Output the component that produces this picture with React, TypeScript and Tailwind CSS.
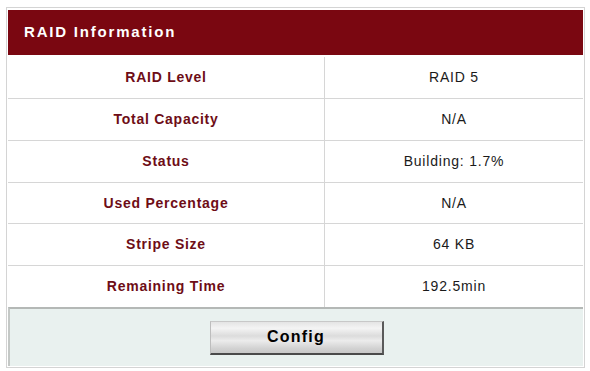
import React from "react";

const rows: [string, string, string][] = [
  ["RAID Level", "RAID 5", "h-[42px] mt-[2px]"],
  ["Total Capacity", "N/A", "h-[42px]"],
  ["Status", "Building: 1.7%", "h-[42px]"],
  ["Used Percentage", "N/A", "h-[41px]"],
  ["Stripe Size", "64 KB", "h-[42px]"],
  ["Remaining Time", "192.5min", "h-[42px]"],
];

export default function App() {
  return (
    <div
      className="w-[590px] h-[371px] bg-white pt-[7px] pl-[6px]"
      style={{ fontFamily: '"Liberation Sans", Arial, sans-serif' }}
    >
      <div className="w-[579px] h-[361px] border border-[#d4d4d4] pt-[2px] px-px pb-px flex flex-col">
        <div className="h-[45px] shrink-0 bg-[#7a0711] flex items-center pl-[16px]">
          <span className="text-white font-bold text-[15px] tracking-[1.8px]">RAID Information</span>
        </div>
        {rows.map(([k, v, h]) => (
          <div key={k} className={`${h} shrink-0 flex border-b border-[#d6d6d6]`}>
            <div className="w-[317px] shrink-0 border-r border-[#d6d6d6] flex items-center justify-center text-[14px] font-bold text-[#6e0d16] tracking-[0.75px]">
              {k}
            </div>
            <div className="flex-1 flex items-center justify-center text-[14px] text-[#1a1a1a] tracking-[0.8px]">
              {v}
            </div>
          </div>
        ))}
        <div className="flex-1 -mt-px border-t-2 border-l-2 border-t-[#b4b8b6] border-l-[#c4c8c6] bg-[#e9f1ef] flex items-center justify-center">
          <button className="w-[174px] h-[34px] border-t border-l border-t-[#c8c8c8] border-l-[#bdbdbd] border-b-2 border-r-2 border-b-[#4a4a4a] border-r-[#5a5a5a] bg-[linear-gradient(180deg,#e4e4e4_0%,#f4f4f4_20%,#dcdcdc_45%,#ececec_60%,#d2d2d2_85%,#c8c8c8_100%)] flex items-center justify-center">
            <span className="text-[16px] font-bold text-black tracking-[1.2px]">Config</span>
          </button>
        </div>
      </div>
    </div>
  );
}
